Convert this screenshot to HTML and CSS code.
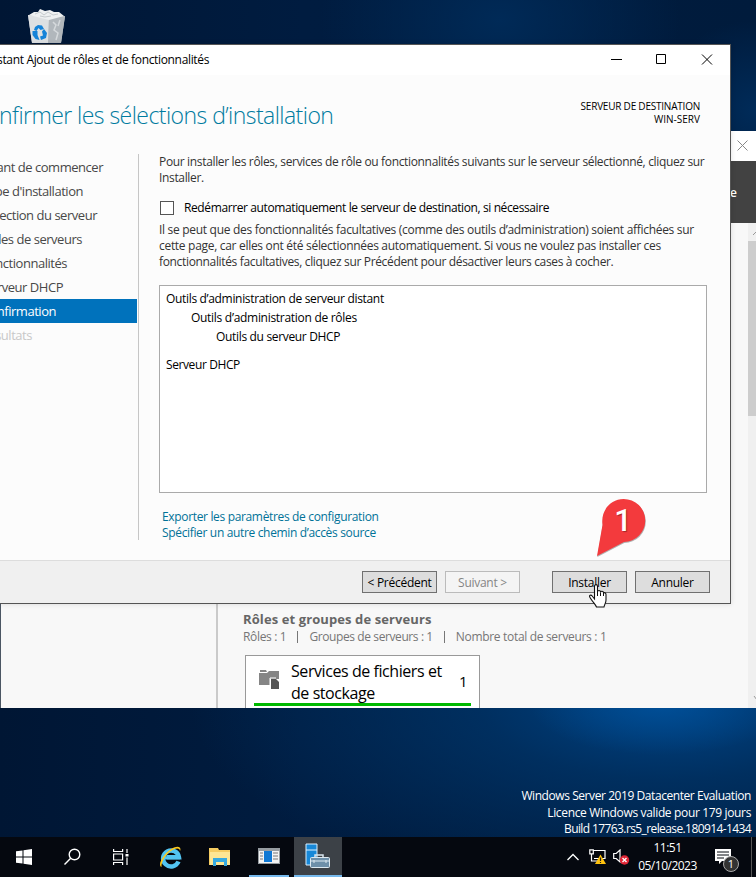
FILE: index.html
```html
<!DOCTYPE html>
<html lang="fr">
<head>
<meta charset="utf-8">
<title>Assistant Ajout de rôles et de fonctionnalités</title>
<link rel="stylesheet" href="styles.css">
</head>
<body>
<div class="desktop">
  <svg class="bin" width="40" height="34" viewBox="0 0 40 34">
    <path d="M1 6 L38 7 L34 34 H5Z" fill="#c3c8cc"/>
    <path d="M1 6 L22 9 L21 34 H5Z" fill="#dde0e2"/>
    <path d="M22 9 L38 7 L34 34 H21Z" fill="#b1b7bc"/>
    <path d="M2 6 L7 3 L11 3 L13 0 L18 2 L23 1 L27 3 L32 3 L37 7 L22 11Z" fill="#eef0f1"/>
    <path d="M8 5l5-2 4 3 4-3 5 3 5-1M13 7l5 1 6-1" stroke="#c5cacd" fill="none"/>
    <path d="M26 13l3 3-2 5 4 3-2 7M33 11l-2 6" stroke="#d5d9dc" stroke-width="1.5" fill="none"/>
    <g fill="#1583d8"><path d="M7 21l1-3 3-2 4 .5 2 3.500-3.500 1-2-2-2 3z"/><path d="M5.500 22l5 0 0 4 2 5-4-1-3-4z"/><path d="M17 20l3 4-1 5-5 2-1-3.500 3-1-1-4z"/></g>
  </svg>

  <section class="manager">
    <header class="manager-title"><svg width="11" height="11" viewBox="0 0 11 11"><path d="M.5.5l10 10M10.500.5l-10 10" stroke="#888" fill="none"/></svg></header>
    <div class="manager-menu">e</div>
    <div class="manager-body">
      <div class="manager-side"></div>
      <div class="manager-main">
        <h2>Rôles et groupes de serveurs</h2>
        <div class="counts"><span class="c1">Rôles : 1</span><i></i><span class="c2">Groupes de serveurs : 1</span><i></i><span class="c3">Nombre total de serveurs : 1</span></div>
        <div class="tile">
          <div class="tile-row">
            <svg width="22" height="22" viewBox="0 0 22 22"><path d="M1 1h6l1 2H1zM0 4h8l2-2h10v8h-9v6H0z" fill="#858585"/><path d="M12 10h5l3 3v7h-8z" fill="#555"/><path d="M11 20V9h6" stroke="#fff" fill="none"/></svg>
            <div class="tile-name"><span>Services de fichiers et</span><span>de stockage</span></div>
            <b>1</b>
          </div>
          <div class="tile-bar"></div>
        </div>
      </div>
      <div class="scroll"><svg width="8" height="18" viewBox="0 0 8 18"><path d="M5 12l4-4" stroke="#999" fill="none"/></svg><div class="thumb"></div><svg class="down" width="8" height="16" viewBox="0 0 8 16"><path d="M6 4l3 4" stroke="#999" fill="none"/></svg></div>
    </div>
  </section>

  <section class="wizard">
    <header class="titlebar">
      <span class="title-text">stant Ajout de rôles et de fonctionnalités</span>
      <svg width="102" height="12" viewBox="0 0 102 12" fill="none" stroke="#000"><path d="M0 5.500h11M45.500.5h9v9h-9zM91 .5l10 10M101 .5l-10 10"/></svg>
    </header>
    <div class="heading"><h1>nfirmer les sélections d’installation</h1>
      <div class="destination"><span class="d1">SERVEUR DE DESTINATION</span><span>WIN-SERV</span></div>
    </div>
    <div class="content">
      <nav>
        <span>ant de commencer</span>
        <span>pe d'installation</span>
        <span>ection du serveur</span>
        <span>les de serveurs</span>
        <span>nctionnalités</span>
        <span>rveur DHCP</span>
        <span class="active"><em>nfirmation</em></span>
        <span class="off">sultats</span>
      </nav>
      <main>
        <p><span class="p1">Pour installer les rôles, services de rôle ou fonctionnalités suivants sur le serveur sélectionné, cliquez sur</span><span class="p2">Installer.</span></p>
        <div class="check"><div class="box"></div><span>Redémarrer automatiquement le serveur de destination, si nécessaire</span></div>
        <p><span class="p3">Il se peut que des fonctionnalités facultatives (comme des outils d’administration) soient affichées sur</span><span class="p4">cette page, car elles ont été sélectionnées automatiquement. Si vous ne voulez pas installer ces</span><span class="p5">fonctionnalités facultatives, cliquez sur Précédent pour désactiver leurs cases à cocher.</span></p>
        <div class="list"><span class="l1">Outils d’administration de serveur distant</span><span class="l2">Outils d’administration de rôles</span><span class="l3">Outils du serveur DHCP</span><span class="l4">Serveur DHCP</span></div>
        <div class="links"><a class="k1">Exporter les paramètres de configuration</a><a class="k2">Spécifier un autre chemin d’accès source</a></div>
      </main>
    </div>
    <footer>
      <button>&lt; Précédent</button><button class="disabled">Suivant &gt;</button><button class="install">Installer</button><button>Annuler</button>
    </footer>
  </section>

  <svg class="marker" width="52" height="62" viewBox="0 0 52 62"><path d="M2 58L7.500 25C6.500 10 17 1 29 1A21.500 21.500 0 0 1 29 44Z" fill="#000" opacity=".3" transform="translate(.3 1)"/><path d="M2 58L7.500 27C5.500 12 16 1 28.500 1A21.500 21.500 0 0 1 29 44Z" fill="#f33a3d"/></svg>
  <div class="marker-number">1</div>
  <svg class="pointer" width="20" height="26" viewBox="0 0 20 26"><path d="M6.500 16V3.500C6.500 1 9.500 1 9.500 3.500V9c0-2 3-1.800 3 0v.5c0-1.800 3-1.500 3 .3v.7c.4-1.500 2.500-1 2.500 1V17c0 3-1.500 4-2 7H8.500c-1-3-4-5-6.500-9.500C.5 12 3 11.500 4.200 13z" fill="#fff" stroke="#111" stroke-width="1.1"/><path d="M9.500 9v4M12.500 9.500v3.500M15.500 10v3" stroke="#111"/></svg>

  <div class="watermark"><span class="w1">Windows Server 2019 Datacenter Evaluation</span><span class="w2">Licence Windows valide pour 179 jours</span><span class="w3">Build 17763.rs5_release.180914-1434</span></div>

  <div class="taskbar">
    <div class="app"><svg width="16" height="16" viewBox="0 0 16 16" fill="#fff"><path d="M0 2.300L6.500 1.400v6.100H0zM7.500 1.200L16 0v7.500H7.500zM0 8.500h6.500v6.100L0 13.700zM7.500 8.500H16V16l-8.500-1.200z"/></svg></div>
    <div class="app"><svg width="18" height="18" viewBox="0 0 18 18" fill="none" stroke="#fff" stroke-width="1.400"><circle cx="10.500" cy="6.500" r="5.300"/><path d="M6.700 10.200L.5 16.500"/></svg></div>
    <div class="app"><svg width="18" height="16" viewBox="0 0 18 16" fill="none" stroke="#fff" stroke-width="1.200"><path d="M.6 0v2.500h9V0M.6 16v-2.500h9V16M.6 5h9v6h-9zM14 0v4M14 8.500V16"/><path d="M12.500 5h3v2.500h-3z" fill="#fff" stroke="none"/></svg></div>
    <div class="app"><svg width="24" height="24" viewBox="0 0 24 24" fill="none"><path d="M19.500 16.500A8 8 0 1 1 20 12.300H7.500" stroke="#52c4f2" stroke-width="4.400"/><path d="M5 12.800h16" stroke="#52c4f2" stroke-width="3"/><path d="M2.500 22C-2.500 20 6 6 15 2.500c5-2 7.500 0 6 3.500C20.500 3 18 3 14.500 4.500 7 8 2 17 2.500 22z" fill="#fcc91d"/></svg></div>
    <div class="app"><svg width="22" height="20" viewBox="0 0 22 20"><path d="M0 1h9l1 2h11v15H0z" fill="#f5cc62"/><path d="M1 5h20v13H1z" fill="#fde694"/><path d="M4 19v-8h14v8h-3v-4H7v4z" fill="#36a9e0"/></svg></div>
    <div class="app running"><svg width="22" height="17" viewBox="0 0 22 17"><path d="M0 0h22v16H0z" fill="#969ca1"/><path d="M1 3h20v12H1z" fill="#f3f3f3"/><path d="M6 3h8v11H6z" fill="#0f78d4"/><path d="M2 5h3M2 8h3M2 11h3M15 5h5M15 8h5M15 11h5" stroke="#777"/></svg></div>
    <div class="app running current"><svg width="26" height="26" viewBox="0 0 26 26"><path d="M1 1h11v21H1z" fill="#1788d8" stroke="#d9efff"/><path d="M1 7h11" stroke="#d9efff"/><path d="M10 15v-3h8v3" fill="none" stroke="#d9e5ee" stroke-width="1.500"/><rect x="5.500" y="14.500" width="19" height="10" rx="1" fill="#6d8fa9" stroke="#dce8f0"/><path d="M6 18h18M9 17v3M21 17v3" stroke="#dce8f0"/></svg></div>
    <div class="tray">
      <svg width="12" height="8" viewBox="0 0 12 8" fill="none" stroke="#fff" stroke-width="1.300"><path d="M.5 7L6 1.500 11.500 7"/></svg>
      <svg class="net" width="17" height="16" viewBox="0 0 17 16" fill="none" stroke="#fff" stroke-width="1.200"><path d="M4.500 1.500H16v8H5M.8.8h3.500v4H.8zM2.500 5v7h8"/><path d="M11.500 5.500L17 15H6z" fill="#ffc20e" stroke="none"/><path d="M11.500 8.500v3.500M11.500 13v1" stroke="#222"/></svg>
      <svg class="vol" width="17" height="16" viewBox="0 0 17 16" fill="none"><path d="M.7 4.500h2.500L7 1v12L3.200 9.500H.7z" stroke="#fff" stroke-width="1.200"/><circle cx="11.500" cy="11" r="4.700" fill="#e02535"/><path d="M9.500 9l4 4M13.500 9l-4 4" stroke="#fff" stroke-width="1.300"/></svg>
      <div class="clock"><span class="t1">11:51</span><span class="t2">05/10/2023</span></div>
      <div class="notice"><svg width="16" height="16" viewBox="0 0 16 16"><path d="M0 0h16v12H7l-3 3v-3H0z" fill="#fff"/><path d="M2 3h12M2 6h12M2 9h7" stroke="#05080f"/></svg><span>1</span></div>
      <div class="peek"></div>
    </div>
  </div>
</div>
</body>
</html>
```
FILE: styles.css
```css
* { box-sizing: border-box; }
body { margin: 0; font-family: "Open Sans", "Noto Sans", sans-serif; font-size: 12px; line-height: 16px; color: #000; }
svg { display: block; flex: none; }
h1, h2, p { margin: 0; }
span, em, h1, h2 { white-space: nowrap; font-style: normal; }
.desktop { position: relative; width: 756px; height: 877px; overflow: hidden;
  background: radial-gradient(ellipse 130px 50px at 660px 705px, #0054a0aa 0, #0054a000 100%),
    radial-gradient(ellipse 480px 200px at 670px 700px, #004486 0, #003468cc 40%, #00285400 100%),
    radial-gradient(ellipse 180px 130px at 500px 20px, #002a57 0, #00285400 100%),
    radial-gradient(ellipse 100px 90px at 756px 110px, #002b59 0, #00285400 100%),
    linear-gradient(90deg, #001634 0, #001c40 40%, #001b3c 100%); }
.bin { position: absolute; left: 27px; top: 9px; }

.manager { position: absolute; left: 0; top: 131px; width: 756px; height: 577px; background: #f8f8f8; border-left: 1px solid #4b5663; display: flex; flex-direction: column; }
.manager-title { height: 30px; background: #fff; display: flex; justify-content: flex-end; align-items: center; padding: 0 8px 2px 0; }
.manager-menu { height: 62px; background: #424242; color: #fff; font-weight: 600; text-align: right; padding: 24px 19px 0 0; }
.manager-body { flex: 1; display: flex; min-height: 0; }
.manager-side { width: 217px; border-right: 2px solid #cacaca; }
.manager-main { flex: 1; padding: 388px 0 0 25px; overflow: hidden; }
h2 { font-size: 13px; line-height: 16px; font-weight: 700; color: #666; letter-spacing: 0.1px; }
.counts { display: flex; align-items: center; color: #767676; height: 18px; margin-top: 1px; }
.counts i { width: 1px; height: 12px; background: #777; margin: 0 11px; }
.c1 { letter-spacing: -0.33px; }
.c2 { letter-spacing: -0.4px; }
.c3 { letter-spacing: -0.32px; }
.tile { width: 235px; height: 70px; margin: 9px 0 0 2px; border: 1px solid #999; background: #fff; padding: 4px 8px; }
.tile-row { display: flex; height: 43px; }
.tile-row svg { margin: 9px 0 0 5px; }
.tile-name { display: flex; flex-direction: column; font-size: 16px; line-height: 22px; width: 168px; margin-left: 10px; letter-spacing: -0.43px; }
.tile-row b { font-size: 15px; font-weight: 400; line-height: 43px; }
.tile-bar { height: 3px; background: #00b900; }
.scroll { width: 8px; background: #f0f0f0; display: flex; flex-direction: column; }
.thumb { height: 175px; background: #cdcdcd; }
.down { margin-top: auto; }

.wizard { position: absolute; left: 0; top: 44px; width: 731px; height: 560px; background: #fcfcfc; border: solid #555; border-width: 1px 1px 1px 0; display: flex; flex-direction: column; box-shadow: 0 0 5px #0002; }
.titlebar { height: 30px; background: #fff; display: flex; align-items: center; justify-content: space-between; padding-right: 17px; }
.titlebar svg { margin-bottom: 1px; }
.title-text { margin-left: -3px; letter-spacing: -0.34px; }
.heading { height: 79px; display: flex; justify-content: space-between; padding: 23px 30px 0 0; }
h1 { font-size: 23px; line-height: 34px; font-weight: 300; color: #007ba0; letter-spacing: -0.55px; margin-left: -1px; }
.destination { display: flex; flex-direction: column; align-items: flex-end; font-size: 10px; line-height: 13px; padding-top: 2px; }
.d1 { letter-spacing: -0.22px; }
.content { display: flex; height: 406px; }
nav { width: 139px; height: 386px; border-right: 1px solid #c6c6c6; font-size: 13px; color: #484848; padding-top: 1px; letter-spacing: -0.47px; }
nav span { display: flex; justify-content: flex-end; height: 24px; line-height: 24px; }
nav span:nth-child(1) { width: 103px; }
nav span:nth-child(2) { width: 83px; }
nav span:nth-child(3) { width: 97px; }
nav span:nth-child(4) { width: 82px; }
nav span:nth-child(5) { width: 67px; }
nav span:nth-child(6) { width: 63px; }
nav span.active { width: 137px; background: #0072bc; color: #fff; }
.active em { display: flex; justify-content: flex-end; width: 56px; margin-right: auto; }
nav .off { width: 32px; color: #c8c8c8; }
main { width: 548px; margin-left: 20px; }
p { display: flex; flex-direction: column; align-items: flex-start; color: #333; }
.p1, .p2, .p5 { letter-spacing: -0.34px; }
.p3 { letter-spacing: -0.3px; }
.p4 { letter-spacing: -0.3px; }
.check { display: flex; align-items: center; height: 16px; margin: 14px 0 6px 1px; letter-spacing: -0.39px; }
.box { width: 14px; height: 14px; border: 1px solid #555; background: #fff; margin-right: 10px; }
.list { height: 208px; border: 1px solid #aaa; background: #fff; margin-top: 15px; padding: 3px 6px; display: flex; flex-direction: column; align-items: flex-start; line-height: 19px; letter-spacing: -0.33px; }
.l2 { margin-left: 25px; letter-spacing: -0.29px; }
.l3 { margin-left: 50px; }
.l4 { margin-top: 9px; letter-spacing: -0.4px; }
.links { display: flex; flex-direction: column; align-items: flex-start; margin: 16px 0 0 3px; color: #007298; letter-spacing: -0.34px; }
footer { flex: 1; background: #f0f0f0; border-top: 1px solid #ddd; display: flex; justify-content: flex-end; padding: 10px 20px 0 0; gap: 8px; }
button { font: 12px/18px "Open Sans", sans-serif; letter-spacing: -0.27px; width: 75px; height: 22px; padding: 2px 0 0; border: 1px solid #707070; background: #ddd; color: #000; white-space: nowrap; }
.disabled { background: #f4f4f4; border-color: #bbb; color: #858585; }
.install { margin-left: 24px; }

.marker { position: absolute; left: 595px; top: 498px; }
.marker-number { position: absolute; left: 613px; top: 505px; width: 20px; text-align: center; color: #fff; font-family: Roboto, sans-serif; font-size: 31px; line-height: 32px; font-weight: 500; text-shadow: 1px 1px 1px #0005; }
.pointer { position: absolute; left: 588px; top: 583px; }
.watermark { position: absolute; right: 5px; top: 788px; display: flex; flex-direction: column; align-items: flex-end; color: #fff; line-height: 16.500px; }
.w1 { letter-spacing: -0.43px; }
.w2 { letter-spacing: -0.35px; }
.w3 { letter-spacing: -0.6px; }

.taskbar { position: absolute; left: 0; top: 837px; width: 756px; height: 40px; background: #05080f; display: flex; }
.app { width: 48px; height: 40px; display: flex; align-items: center; justify-content: center; margin-right: 1px; }
.running { border-bottom: 2px solid #76b9ed; width: 40px; margin: 0 5px 0 4px; }
.current { width: 48px; margin: 0; background: #3c4147; }
.tray { margin-left: auto; display: flex; align-items: center; color: #fff; }
.net { margin-left: 10px; }
.vol { margin-left: 7px; }
.clock { width: 66px; display: flex; flex-direction: column; align-items: center; line-height: 18px; margin-left: 6px; padding-right: 3px; letter-spacing: -0.5px; }
.notice { width: 37px; height: 40px; position: relative; padding: 12px 0 0 13px; }
.notice span { position: absolute; left: 21px; top: 19px; width: 16px; height: 16px; line-height: 14px; border: 1px solid #aaa; border-radius: 50%; background: #333; text-align: center; font-size: 11px; }
.peek { width: 5px; height: 40px; border-left: 1px solid #555; margin-left: 12px; }
```
